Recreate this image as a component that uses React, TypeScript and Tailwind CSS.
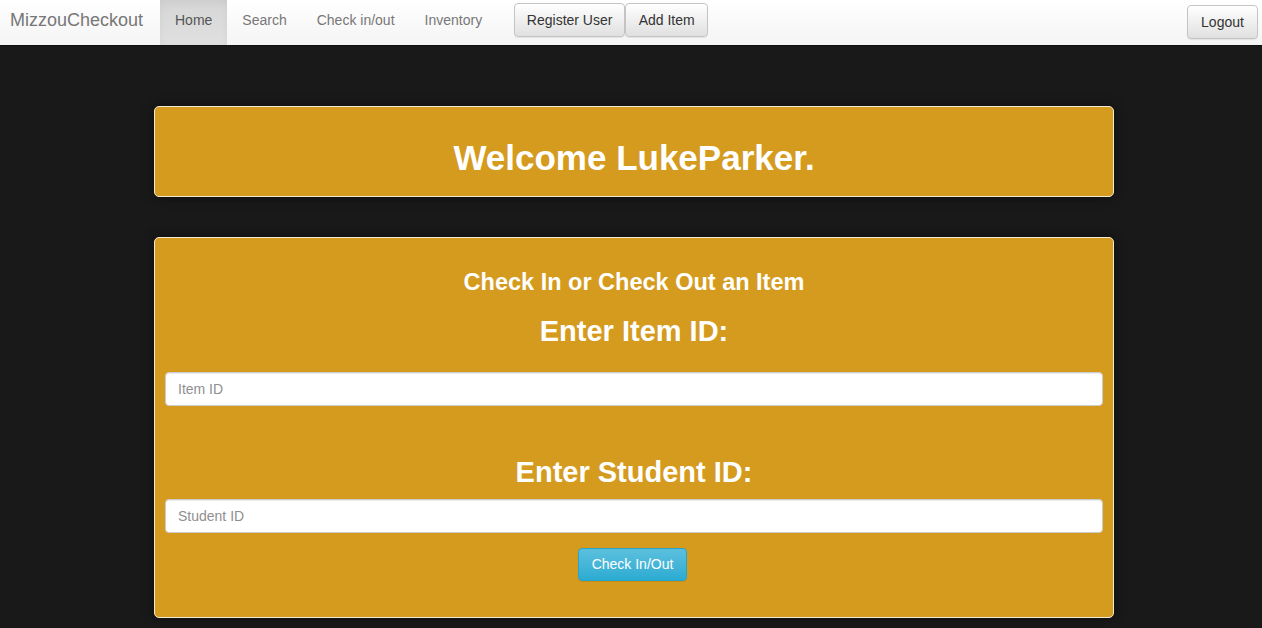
import React from 'react'

const navLinks = ['Home', 'Search', 'Check in/out', 'Inventory']

function NavButton({ label, className = '' }: { label: string; className?: string }) {
  return (
    <button
      type="button"
      className={`h-[34px] whitespace-nowrap rounded-[4px] border border-[#c4c4c4] bg-gradient-to-b from-white to-[#e0e0e0] text-[14px] text-[#333] shadow-[inset_0_1px_0_rgba(255,255,255,0.15),0_1px_1px_rgba(0,0,0,0.075)] ${className}`}
    >
      {label}
    </button>
  )
}

export default function App() {
  return (
    <div
      className="min-h-screen bg-[#191919]"
      style={{ fontFamily: '"Liberation Sans", Arial, sans-serif' }}
    >
      {/* Navbar */}
      <nav className="flex h-[46px] items-stretch border-b border-[#101010] bg-gradient-to-b from-white to-[#f4f4f4]">
        <div className="flex w-[160px] items-center pb-[5px] pl-[10px] text-[18px] text-[#777]">MizzouCheckout</div>
        <ul className="flex items-stretch">
          {navLinks.map((link, i) => (
            <li
              key={link}
              className={
                i === 0
                  ? 'flex items-center bg-gradient-to-b from-[#d6d6d6] to-[#e0e0e0] px-[15px] pb-[4px] text-[14px] text-[#555] shadow-[inset_0_3px_9px_rgba(0,0,0,0.05)]'
                  : 'flex items-center px-[15px] pb-[4px] text-[14px] text-[#777]'
              }
            >
              {link}
            </li>
          ))}
        </ul>
        <div className="ml-[17px] flex items-center pb-[5px]">
          <NavButton label="Register User" className="w-[111px]" />
          <NavButton label="Add Item" className="w-[83px]" />
        </div>
        <div className="ml-auto flex items-center pb-[1px] pr-[4px]">
          <NavButton label="Logout" className="w-[71px]" />
        </div>
      </nav>

      <main className="ml-[154px] w-[960px] pt-[60px]">
        {/* Welcome */}
        <section className="flex h-[91px] items-center justify-center rounded-[5px] border border-[#f3ead3] bg-[#d59b1f] pt-[12px] shadow-[0_0_12px_rgba(0,0,0,0.45)]">
          <h1 className="text-[35px] font-bold leading-[40px] text-white">Welcome LukeParker.</h1>
        </section>

        {/* Check in / out */}
        <section className="mt-[40px] flex h-[381px] flex-col items-center rounded-[5px] border border-[#f3ead3] bg-[#d59b1f] px-[10px] shadow-[0_0_12px_rgba(0,0,0,0.45)]">
          <h3 className="mt-[31px] text-[23.5px] font-bold leading-[26px] text-white">Check In or Check Out an Item</h3>
          <h2 className="mt-[20px] text-[29px] font-bold leading-[33px] text-white">Enter Item ID:</h2>
          <input
            type="text"
            placeholder="Item ID"
            className="mt-[24px] h-[34px] w-full rounded-[4px] border border-[#ccc] bg-white px-3 text-[14px] text-[#555] shadow-[inset_0_1px_1px_rgba(0,0,0,0.075)] placeholder:text-[#8f8f8f] focus:outline-none"
          />
          <h2 className="mt-[50px] text-[29px] font-bold leading-[33px] text-white">Enter Student ID:</h2>
          <input
            type="text"
            placeholder="Student ID"
            className="mt-[10px] h-[34px] w-full rounded-[4px] border border-[#ccc] bg-white px-3 text-[14px] text-[#555] shadow-[inset_0_1px_1px_rgba(0,0,0,0.075)] placeholder:text-[#8f8f8f] focus:outline-none"
          />
          <button
            type="button"
            className="mr-[3px] mt-[15px] h-[33px] w-[109px] rounded-[4px] border border-[#28a4c9] bg-gradient-to-b from-[#5bc0de] to-[#2aabd2] text-[14px] text-white shadow-[0_1px_1px_rgba(0,0,0,0.075)]"
          >
            Check In/Out
          </button>
        </section>
      </main>
    </div>
  )
}
